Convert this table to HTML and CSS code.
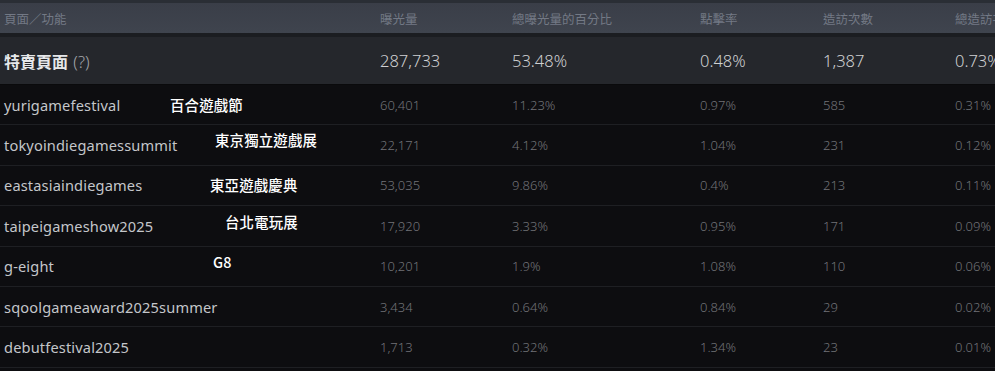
FILE: index.html
```html
<!DOCTYPE html>
<html lang="zh-Hant">
<head>
<meta charset="utf-8">
<link rel="stylesheet" href="styles.css">
</head>
<body>
<div class="table">
  <div class="topstrip"></div>
  <div class="row head">
    <div class="cell name">頁面／功能</div>
    <div class="cell">曝光量</div>
    <div class="cell">總曝光量的百分比</div>
    <div class="cell">點擊率</div>
    <div class="cell">造訪次數</div>
    <div class="cell">總造訪次數的百分比</div>
  </div>
  <div class="row featured">
    <div class="cell name"><b>特賣頁面</b> <span class="q">(?)</span></div>
    <div class="cell">287,733</div>
    <div class="cell">53.48%</div>
    <div class="cell">0.48%</div>
    <div class="cell">1,387</div>
    <div class="cell">0.73%</div>
  </div>
  <div class="row data">
    <div class="cell name">yurigamefestival<span class="note n1">百合遊戲節</span></div>
    <div class="cell">60,401</div>
    <div class="cell">11.23%</div>
    <div class="cell">0.97%</div>
    <div class="cell">585</div>
    <div class="cell">0.31%</div>
  </div>
  <div class="row data">
    <div class="cell name">tokyoindiegamessummit<span class="note n2">東京獨立遊戲展</span></div>
    <div class="cell">22,171</div>
    <div class="cell">4.12%</div>
    <div class="cell">1.04%</div>
    <div class="cell">231</div>
    <div class="cell">0.12%</div>
  </div>
  <div class="row data">
    <div class="cell name">eastasiaindiegames<span class="note n3">東亞遊戲慶典</span></div>
    <div class="cell">53,035</div>
    <div class="cell">9.86%</div>
    <div class="cell">0.4%</div>
    <div class="cell">213</div>
    <div class="cell">0.11%</div>
  </div>
  <div class="row data">
    <div class="cell name">taipeigameshow2025<span class="note n4">台北電玩展</span></div>
    <div class="cell">17,920</div>
    <div class="cell">3.33%</div>
    <div class="cell">0.95%</div>
    <div class="cell">171</div>
    <div class="cell">0.09%</div>
  </div>
  <div class="row data">
    <div class="cell name">g-eight<span class="note n5">G8</span></div>
    <div class="cell">10,201</div>
    <div class="cell">1.9%</div>
    <div class="cell">1.08%</div>
    <div class="cell">110</div>
    <div class="cell">0.06%</div>
  </div>
  <div class="row data">
    <div class="cell name">sqoolgameaward2025summer</div>
    <div class="cell">3,434</div>
    <div class="cell">0.64%</div>
    <div class="cell">0.84%</div>
    <div class="cell">29</div>
    <div class="cell">0.02%</div>
  </div>
  <div class="row data">
    <div class="cell name">debutfestival2025</div>
    <div class="cell">1,713</div>
    <div class="cell">0.32%</div>
    <div class="cell">1.34%</div>
    <div class="cell">23</div>
    <div class="cell">0.01%</div>
  </div>
</div>
</body>
</html>
```

FILE: styles.css
```css
html, body {
  margin: 0;
  padding: 0;
  background: #0d0d10;
  overflow: hidden;
}
.table {
  width: 995px;
  height: 371px;
  overflow: hidden;
  font-family: "Noto Sans", "Noto Sans CJK TC", sans-serif;
}
.topstrip {
  height: 3px;
  background: #2a2e35;
}
.row {
  display: grid;
  grid-template-columns: 380px 132px 188px 123px 132px 40px;
  align-items: center;
  white-space: nowrap;
}
.cell {
  min-width: 0;
}
.cell.name {
  padding-left: 4px;
  position: relative;
}
.head {
  height: 30px;
  background: linear-gradient(#3a3e48, #3f444e);
  border-bottom: 4px solid #1b1d21;
  font-size: 12.5px;
  color: #737985;
}
.head .cell {
  font-family: "Noto Sans CJK TC", sans-serif;
}
.featured {
  height: 47px;
  background: #25272c;
  font-size: 16.5px;
  font-weight: 300;
  color: #cfd0d2;
  border-bottom: 1px solid #0a0a0c;
}
.featured b {
  font-family: "Noto Sans CJK TC", sans-serif;
  font-weight: 700;
  font-size: 16px;
  color: #e6e7e9;
}
.featured .q {
  color: #a3a6ab;
  font-size: 16.5px;
  font-weight: 300;
  margin-left: 1px;
}
.data {
  height: 40.4px;
  box-sizing: border-box;
  border-bottom: 1px solid #1e1f23;
  font-size: 13px;
  color: #727378;
}
.data .name {
  font-size: 14.6px;
  letter-spacing: 0.15px;
  color: #c4c6ca;
}
.data .cell:not(.name) {
  font-weight: 300;
}
.note {
  position: absolute;
  font-family: "Noto Sans CJK TC", sans-serif;
  font-weight: 500;
  font-size: 14.4px;
  letter-spacing: 0.2px;
  color: #ffffff;
  line-height: 1;
}
.n1 { left: 170px; top: 3px; }
.n2 { left: 215px; top: -2px; }
.n3 { left: 210px; top: 3px; }
.n4 { left: 225px; top: -1px; }
.n5 { left: 213px; top: -1px; }
```
